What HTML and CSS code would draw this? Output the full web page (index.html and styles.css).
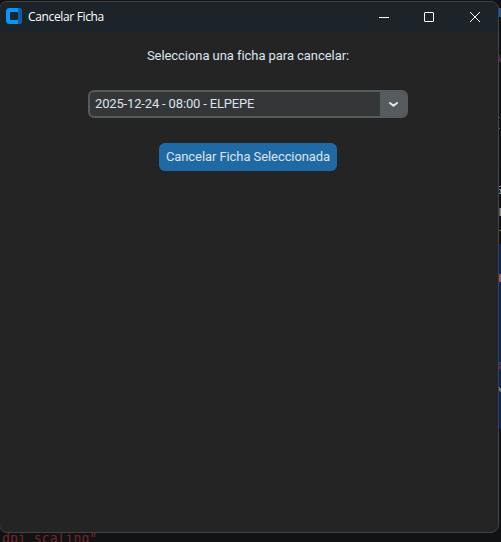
FILE: index.html
```html
<!DOCTYPE html>
<html lang="es">
<head>
<meta charset="utf-8">
<title>Cancelar Ficha</title>
<link rel="stylesheet" href="styles.css">
</head>
<body>
<div class="desktop">
  <svg class="editor-edge" width="3" height="542" viewBox="0 0 3 542" shape-rendering="crispEdges" aria-hidden="true">
    <path fill="#07245c" d="M0 244h3v185H0z"/>
    <path fill="#90a3ad" d="M0 10h2v1H0z"/>
    <path fill="#245b94" d="M1 8h2v9H1z"/>
    <path fill="#4d2850" d="M0 55h2v3H0zM1 58h2v4H1z"/>
    <path fill="#49637e" d="M0 117h2v1H0zM0 128h2v1H0z"/>
    <path fill="#141650" d="M1 164h1v3H1zM1 170h1v2H1z"/>
    <path fill="#71828b" d="M1 186h2v1H1zM0 189h3v1H0zM0 190h1v4H0zM2 190h1v4H2zM1 193h1v1H1z"/>
    <path fill="#315b87" d="M0 208h2v8H0z"/>
    <path fill="#a08b70" d="M2 208h1v8H2z"/>
    <path fill="#817056" d="M0 230h1v8H0zM1 230h2v1H1z"/>
    <path fill="#42647b" d="M0 274h1v8H0z"/>
    <path fill="#9b5064" d="M1 274h2v8H1z"/>
    <path fill="#493063" d="M1 362h2v3H1zM0 366h3v3H0z"/>
    <path fill="#62798a" d="M0 384h1v3H0zM1 387h1v4H1zM2 388h1v4H2z"/>
  </svg>
  <div class="editor-line">dpi_scaling"</div>
  <main class="window">
    <header class="titlebar">
      <svg class="app-icon" width="16" height="16" viewBox="0 0 16 16" aria-hidden="true">
        <rect width="16" height="16" rx="3.5" fill="#0798fb"/>
        <path d="M12 4V0q4 0 4 4v8q0 4-4 4z" fill="#075fac"/>
        <rect x="4" y="4" width="8" height="8" rx="1" fill="#1c242a"/>
      </svg>
      <h1 class="title">Cancelar Ficha</h1>
      <div class="controls">
        <button class="control" aria-label="Minimizar"><svg class="minimize" width="12" height="12" viewBox="0 0 12 12"><path d="M1 6.5h10"/></svg></button>
        <button class="control" aria-label="Maximizar"><svg width="12" height="12" viewBox="0 0 12 12"><rect x="1.5" y="1.5" width="9" height="9" rx=".5"/></svg></button>
        <button class="control" aria-label="Cerrar"><svg width="12" height="12" viewBox="0 0 12 12"><path d="M1 1l10 10M11 1L1 11"/></svg></button>
      </div>
    </header>
    <section class="content">
      <p class="prompt">Selecciona una ficha para cancelar:</p>
      <div class="combo">
        <span class="combo-value">2025-12-24 - 08:00 - ELPEPE</span>
        <button class="combo-arrow" aria-label="Abrir lista"><svg width="12" height="8" viewBox="0 0 12 8"><path d="M3 3L6.5 5.8L10 3"/></svg></button>
      </div>
      <button class="action">Cancelar Ficha Seleccionada</button>
    </section>
  </main>
</div>
</body>
</html>
```
FILE: styles.css
```css
* { box-sizing: border-box; }
body { margin: 0; overflow: hidden; background: #111214; }
button { border: 0; padding: 0; color: inherit; font: inherit; }
.desktop {
  position: relative;
  width: 501px;
  height: 542px;
  overflow: hidden;
  background: #111214;
  font-family: Roboto, sans-serif;
}
.editor-edge { position: absolute; right: 0; top: 0; }
.editor-line {
  position: absolute;
  left: 2px;
  top: 531px;
  color: #742528;
  font: 13.2px/16px "DejaVu Sans Mono", monospace;
  white-space: pre;
}
.window {
  position: absolute;
  left: -1px;
  top: 1px;
  width: 500px;
  height: 532px;
  display: flex;
  flex-direction: column;
  overflow: hidden;
  border: 1px solid #414243;
  border-radius: 8px;
  background: #242424;
}
.titlebar {
  display: flex;
  align-items: center;
  flex: none;
  height: 30px;
  padding-left: 6px;
  background: #1c242a;
}
.app-icon { margin-bottom: 2px; }
.title {
  margin: 0 0 0 6px;
  color: #fff;
  font: 400 12px/16px "Open Sans", sans-serif;
  letter-spacing: -.35px;
}
.controls { display: flex; margin-left: auto; }
.control {
  display: grid;
  place-items: center;
  width: 46px;
  height: 30px;
  background: transparent;
}
.control svg { fill: none; stroke: #fff; stroke-width: 1; }
.control .minimize { margin-left: 2px; }
.content {
  display: flex;
  flex-direction: column;
  align-items: center;
  padding: 14px 2px 0 0;
  color: #dce4ee;
  font-size: 13px;
}
.prompt { margin: 0; line-height: 20px; letter-spacing: -.06px; }
.combo {
  display: flex;
  width: 320px;
  height: 28px;
  margin-top: 24px;
  overflow: hidden;
  border: 2px solid #565b5e;
  border-radius: 6px;
  background: #343638;
}
.combo-value { flex: 1; padding-left: 5px; line-height: 23px; letter-spacing: -.16px; }
.combo-arrow {
  display: grid;
  place-items: center;
  width: 26px;
  background: #565b5e;
}
.combo-arrow svg {
  fill: none;
  stroke: #dce4ee;
  stroke-width: 2.1;
  stroke-linecap: round;
  stroke-linejoin: round;
}
.action {
  width: 178px;
  height: 28px;
  margin-top: 25px;
  border-radius: 6px;
  background: #1f6aa5;
  line-height: 28px;
  letter-spacing: -.08px;
}
```
